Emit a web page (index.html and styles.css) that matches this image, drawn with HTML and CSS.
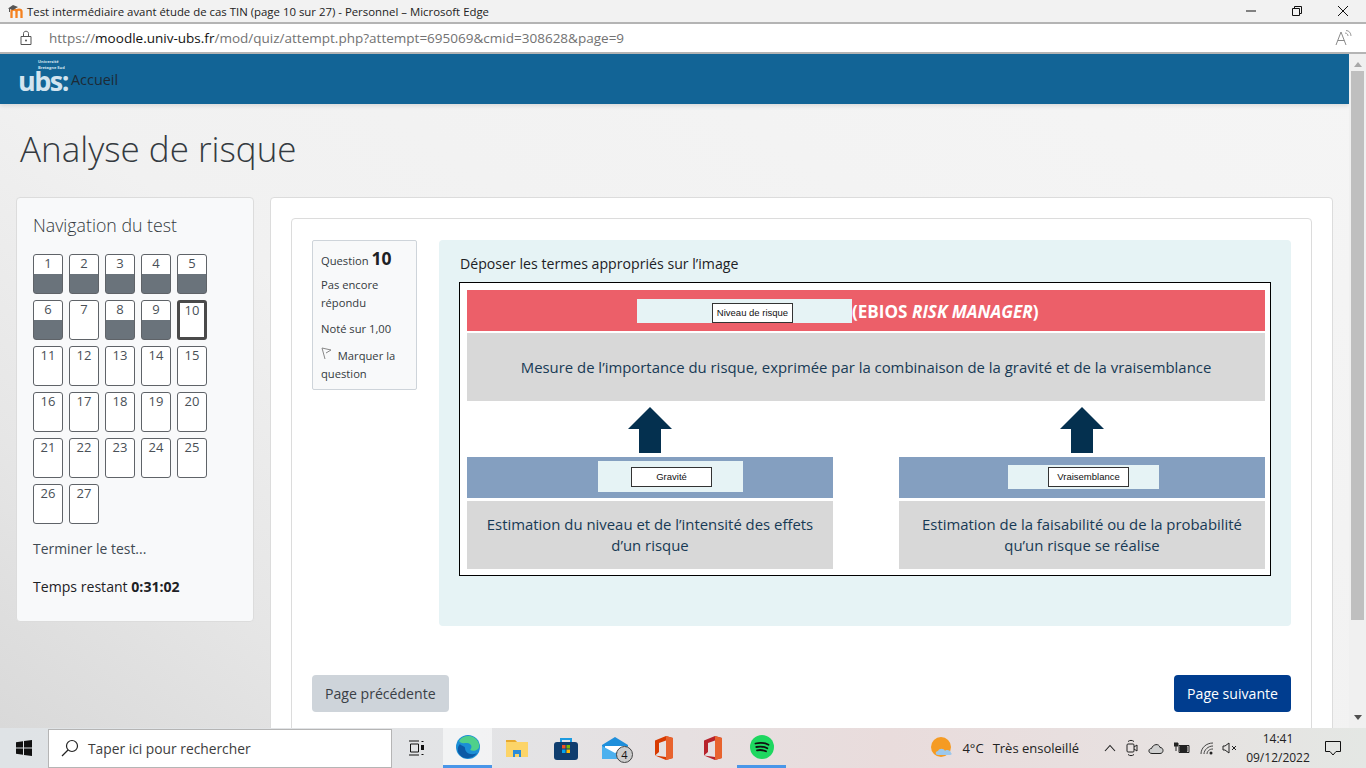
FILE: index.html
```html
<!DOCTYPE html>
<html lang="fr">
<head>
<meta charset="utf-8">
<title>Test intermédiaire</title>
<link rel="stylesheet" href="styles.css">
</head>
<body>
<div class="titlebar">
 <svg class="favicon" width="16" height="14" viewBox="0 0 16 14"><path d="M3.500 14V7.500c0-2.500 5-2.500 5 0V14M8.500 7.500c0-2.500 5-2.500 5 0V14" stroke="#f58220" stroke-width="2.300" fill="none"/><path d="M0 4.500L5 1l5 2-5 3z" fill="#555"/><path d="M1.500 4.500V8" stroke="#555"/></svg>
 <span class="wintitle">Test intermédiaire avant étude de cas TIN (page 10 sur 27) - Personnel – Microsoft Edge</span>
 <div class="winbtns">
  <svg width="12" height="12" viewBox="0 0 12 12"><path d="M1 6h10" stroke="#111" fill="none"/></svg>
  <svg width="12" height="12" viewBox="0 0 12 12"><path d="M1.500 3.500h7v7h-7zM3.500 3.500V1.500h7v7h-2" stroke="#111" fill="none"/></svg>
  <svg width="12" height="12" viewBox="0 0 12 12"><path d="M1 1l10 10M11 1L1 11" stroke="#111" fill="none"/></svg>
 </div>
</div>
<div class="addressbar">
 <svg class="lock" width="14" height="16" viewBox="0 0 14 16"><path d="M2 6.500h10v8H2zM4.500 6.500V3.500c0-3 5-3 5 0v3" stroke="#555" fill="none"/><circle cx="7" cy="10.500" r="1" fill="#555"/></svg>
 <span class="url">https://<b>moodle.univ-ubs.fr</b>/mod/quiz/attempt.php?attempt=695069&amp;cmid=308628&amp;page=9</span>
 <svg class="readaloud" width="18" height="16" viewBox="0 0 18 16"><path d="M1 15L6 2l5 13M2.800 10.500h6.500" stroke="#8a8a8a" fill="none"/><path d="M10 3c2 0 3 1.500 3 3M11 0.500c3 0 5 2.500 5 5.500" stroke="#9a9a9a" fill="none"/></svg>
</div>
<div class="viewport">
 <div class="page">
  <nav class="topnav">
   <span class="logo"><span class="logo-small">Université<br>Bretagne Sud</span>ubs:</span>
   <span class="home">Accueil</span>
  </nav>
  <h1 class="pagetitle">Analyse de risque</h1>
  <div class="columns">
   <aside class="navblock">
    <h2 class="navtitle">Navigation du test</h2>
    <div class="qgrid">
     <span class="qbtn done">1</span>
     <span class="qbtn done">2</span>
     <span class="qbtn done">3</span>
     <span class="qbtn done">4</span>
     <span class="qbtn done">5</span>
     <span class="qbtn done">6</span>
     <span class="qbtn">7</span>
     <span class="qbtn done">8</span>
     <span class="qbtn done">9</span>
     <span class="qbtn current">10</span>
     <span class="qbtn">11</span>
     <span class="qbtn">12</span>
     <span class="qbtn">13</span>
     <span class="qbtn">14</span>
     <span class="qbtn">15</span>
     <span class="qbtn">16</span>
     <span class="qbtn">17</span>
     <span class="qbtn">18</span>
     <span class="qbtn">19</span>
     <span class="qbtn">20</span>
     <span class="qbtn">21</span>
     <span class="qbtn">22</span>
     <span class="qbtn">23</span>
     <span class="qbtn">24</span>
     <span class="qbtn">25</span>
     <span class="qbtn">26</span>
     <span class="qbtn">27</span>
    </div>
    <div class="finish">Terminer le test...</div>
    <div class="timer">Temps restant <b>0:31:02</b></div>
   </aside>
   <main class="region">
    <div class="card">
     <div class="question">
      <div class="info">
       <div class="qno">Question <b>10</b></div>
       <div class="inforow">Pas encore répondu</div>
       <div class="inforow">Noté sur 1,00</div>
       <div class="flagrow"><svg width="11" height="13" viewBox="0 0 11 13"><path d="M1 1l9 2-5 3M1 1l3 11" stroke="#888" fill="none"/></svg> &nbsp;Marquer la question</div>
      </div>
      <div class="content">
       <p class="prompt">Déposer les termes appropriés sur l’image</p>
       <div class="diagram">
        <div class="band red"><span class="ebios">(EBIOS <i>RISK MANAGER</i>)</span></div>
        <div class="desc wide">Mesure de l’importance du risque, exprimée par la combinaison de la gravité et de la vraisemblance</div>
        <div class="arrows">
         <svg width="44" height="46" viewBox="0 0 44 46"><path d="M22 0l22 22H33v24H11V22H0z" fill="#04304f"/></svg>
         <svg width="44" height="46" viewBox="0 0 44 46"><path d="M22 0l22 22H33v24H11V22H0z" fill="#04304f"/></svg>
        </div>
        <div class="pair">
         <div class="side">
          <div class="band blue"></div>
          <div class="desc">Estimation du niveau et de l’intensité des effets d’un risque</div>
         </div>
         <div class="side">
          <div class="band blue"></div>
          <div class="desc">Estimation de la faisabilité ou de la probabilité qu’un risque se réalise</div>
         </div>
        </div>
        <div class="zone zone-risk"></div>
        <div class="zone zone-grav"></div>
        <div class="zone zone-vrai"></div>
        <div class="drag drag-risk">Niveau de risque</div>
        <div class="drag drag-grav">Gravité</div>
        <div class="drag drag-vrai">Vraisemblance</div>
       </div>
      </div>
     </div>
     <div class="buttons">
      <span class="btn prev">Page précédente</span>
      <span class="btn next">Page suivante</span>
     </div>
    </div>
   </main>
  </div>
 </div>
 <div class="scrollbar">
  <span class="arrow-up"></span>
  <span class="thumb"></span>
  <span class="arrow-down"></span>
 </div>
</div>
<footer class="taskbar">
 <svg class="start" width="16" height="16" viewBox="0 0 16 16"><path d="M0 2.300l7-1v6.200H0zM8 1.100l8-1.100v7.500H8zM0 8.500h7v6.200l-7-1zM8 8.500h8V16l-8-1.100z" fill="#111"/></svg>
 <div class="search">
  <svg width="18" height="18" viewBox="0 0 18 18"><circle cx="11" cy="7" r="5.500" stroke="#222" fill="none" stroke-width="1.200"/><path d="M7 11l-6 6" stroke="#222" stroke-width="1.200"/></svg>
  <span>Taper ici pour rechercher</span>
 </div>
 <svg class="taskview" width="16" height="16" viewBox="0 0 16 16"><path d="M1 1h10M1 15h10M2.500 4h8v8h-8z" stroke="#111" fill="none"/><path d="M13.500 1h2v1h-2zM13 5h3v5h-3zM13.500 14h2v1h-2z" fill="#111"/></svg>
 <div class="apps">
  <span class="app active">
   <svg width="24" height="24" viewBox="0 0 24 24"><circle cx="12" cy="12" r="12" fill="#1b8fd6"/><path d="M3 6C7-1 20-1 23 9c1.500 6-5 8-9 6 3-3 1-7-3-7-3 0-6 1-8-2z" fill="#4fd08a"/><path d="M9 13c0 5 6 8 12 5-4 6-13 7-17 2-3-3-3-8 0-11 1 2 5 2 5 4z" fill="#0c5aa6"/></svg>
  </span>
  <span class="app">
   <svg width="22" height="20" viewBox="0 0 22 20"><path d="M0 2h9l2 2h11v15H0z" fill="#fcd468"/><path d="M0 2h9l2 2H0z" fill="#e8a92e"/><path d="M7 12h8v7h-2v-3H9v3H7z" fill="#2b8bd8"/></svg>
  </span>
  <span class="app">
   <svg width="24" height="24" viewBox="0 0 24 24"><path d="M7 6V3h10v3" stroke="#1c9be0" stroke-width="2" fill="none"/><rect x="0" y="6" width="24" height="18" rx="3" fill="#0f3d6e"/><path d="M8 9h3.500v3.500H8z" fill="#f25022"/><path d="M12.500 9H16v3.500h-3.500z" fill="#7fba00"/><path d="M8 13.500h3.500V17H8z" fill="#00a4ef"/><path d="M12.500 13.500H16V17h-3.500z" fill="#ffb900"/></svg>
  </span>
  <span class="app mail">
   <svg width="26" height="22" viewBox="0 0 26 22"><path d="M0 8l13-8 13 8v14H0z" fill="#1f8fdb"/><path d="M3 9h20v5l-10 5-10-5z" fill="#fff"/><path d="M0 9l13 7 13-7v13H0z" fill="#4bb0ee"/></svg>
   <span class="badge">4</span>
  </span>
  <span class="app">
   <svg width="18" height="24" viewBox="0 0 18 24"><path d="M0 4.500L11 0l7 2v20l-7 2L0 19.500l11 1.500V4.500L4 7v9l-4 3.500z" fill="#d83b01"/><path d="M11 0l7 2v20l-7 2z" fill="#e8632e"/></svg>
  </span>
  <span class="app">
   <svg width="18" height="24" viewBox="0 0 18 24"><path d="M0 4.500L11 0l7 2v20l-7 2L0 19.500l11 1.500V4.500L4 7v9l-4 3.500z" fill="#b7232b"/><path d="M11 0l7 2v20l-7 2z" fill="#e8632e"/></svg>
  </span>
  <span class="app active-line">
   <svg width="24" height="24" viewBox="0 0 24 24"><circle cx="12" cy="12" r="12" fill="#1ed760"/><path d="M5.500 8.500c4-1 9-1 13 1.200M6.300 12c3.500-.8 7.500-.6 11 1.300M7 15.300c3-.6 6-.4 9 1" stroke="#111" stroke-width="1.800" fill="none" stroke-linecap="round"/></svg>
  </span>
 </div>
 <div class="weather">
  <svg width="22" height="22" viewBox="0 0 22 22"><circle cx="10" cy="10" r="10" fill="#f59b23"/><path d="M7 18c-3 0-3-4 0-4 1-3 6-3 7 0 1-2 6-1 6 2 1 0 1 2-1 2z" fill="#9cc8ec"/></svg>
  <span class="temp">4°C</span>
  <span>Très ensoleillé</span>
 </div>
 <div class="tray">
  <svg width="12" height="8" viewBox="0 0 12 8"><path d="M1 7l5-5.500L11 7" stroke="#222" fill="none" stroke-width="1.100"/></svg>
  <svg width="12" height="18" viewBox="0 0 12 18"><rect x="1" y="5" width="7" height="8" rx="1" stroke="#222" fill="none"/><path d="M8 8l3-2v6l-3-2M2 2.500c2-1.500 4-1.500 6 0M2 15.500c2 1.500 4 1.500 6 0" stroke="#222" fill="none"/></svg>
  <svg width="16" height="11" viewBox="0 0 16 11"><path d="M4 10.500c-4 0-4-5-.5-5C5 1 11 0 12 4.500c4 0 4 6 0 6z" stroke="#222" fill="#cfcfcf"/></svg>
  <svg width="16" height="12" viewBox="0 0 16 12"><path d="M5 3.500h10v7H5z" stroke="#222" fill="none"/><path d="M6 4.500h7v5H6zM0 1h4v3H0zM2 4v5" fill="#222" stroke="#222"/></svg>
  <svg width="14" height="13" viewBox="0 0 14 13"><path d="M1 12C1 6 6 1 13 1M4 12c0-4 4-8 9-8M7 12c0-2.500 2-5 6-5" stroke="#444" fill="none"/><circle cx="11" cy="11" r="1.500" fill="#222"/></svg>
  <svg class="mute" width="15" height="12" viewBox="0 0 15 12"><path d="M1 4h2l4-3v10L3 8H1z" stroke="#222" fill="none"/><path d="M10 4l4 4M14 4l-4 4" stroke="#222"/></svg>
 </div>
 <div class="clock"><span>14:41</span><span>09/12/2022</span></div>
 <svg class="notif" width="16" height="15" viewBox="0 0 16 15"><path d="M.5.500h15v10h-4.500l-3 3.500-3-3.500H.5z" stroke="#111" fill="none"/></svg>
</footer>
</body>
</html>
```

FILE: styles.css
```css
* {
 box-sizing: border-box;
}
html, body {
 margin: 0;
 height: 768px;
 overflow: hidden;
}
body {
 font-family: "Open Sans", "Noto Sans", sans-serif;
 color: #1d2125;
 font-size: 13px;
 background: #f0f0f0;
}

/* browser window */
.titlebar {
 height: 24px;
 background: #f2f2f2;
 border-bottom: 2px solid #b4b4b4;
 display: flex;
 align-items: center;
 padding-left: 8px;
 font-size: 11.400px;
 color: #222;
}
.favicon {
 margin-right: 3px;
}
.winbtns {
 margin-left: auto;
 display: flex;
 gap: 34px;
 padding-right: 17px;
}
.addressbar {
 height: 30px;
 background: #fff;
 border-bottom: 2px solid #b4b4b4;
 display: flex;
 align-items: center;
 padding-left: 19px;
}
.url {
 margin-left: 16px;
 font-size: 13.520px;
 color: #727272;
}
.url b {
 font-weight: 400;
 color: #111;
}
.readaloud {
 margin-left: auto;
 margin-right: 13px;
}

/* page */
.viewport {
 height: 674px;
 display: flex;
}
.page {
 flex: 1;
 overflow: hidden;
 background: linear-gradient(35deg, #d9d9d9 0%, #e6e6e6 18%, #f1f1f1 40%, #f5f5f5 100%);
}
.topnav {
 height: 50px;
 background: #126496;
 display: flex;
 align-items: center;
 padding-left: 18px;
 box-shadow: 0 2px 4px rgba(0,0,0,.1);
}
.logo {
 position: relative;
 width: 53px;
 font-size: 27px;
 line-height: 30px;
 font-weight: 700;
 letter-spacing: -1.500px;
 color: #d3e4ef;
 margin-top: 3px;
}
.logo-small {
 position: absolute;
 left: 20px;
 top: -7px;
 font-size: 4px;
 line-height: 6px;
 letter-spacing: 0;
 white-space: nowrap;
}
.home {
 font-size: 14.400px;
 color: #1d2a35;
}
.pagetitle {
 margin: 0;
 height: 93px;
 padding: 22px 0 0 20px;
 font-family: "Open Sans", sans-serif;
 font-size: 35px;
 line-height: 46px;
 font-weight: 300;
 color: #343a40;
}
.columns {
 display: flex;
 align-items: flex-start;
 padding-left: 16px;
 gap: 16px;
}

/* navigation du test */
.navblock {
 width: 238px;
 height: 425px;
 flex: none;
 background: #f8f9fa;
 border: 1px solid #dcdcdc;
 border-radius: 4px;
 padding: 15px 16px 16px;
}
.navtitle {
 margin: 0 0 17px;
 font-size: 17.750px;
 line-height: 24px;
 font-weight: 300;
 color: #343a40;
}
.qgrid {
 display: grid;
 grid-template-columns: repeat(5, 30px);
 grid-auto-rows: 40px;
 gap: 6px;
}
.qbtn {
 border: 1px solid #5f6368;
 border-radius: 3px;
 background: #fff;
 color: #495057;
 font-size: 13px;
 line-height: 17px;
 text-align: center;
}
.qbtn.done {
 background: linear-gradient(#fff 19px, #6a737b 19px);
}
.qbtn.current {
 border: 3px solid #4a4a4a;
 line-height: 15px;
}
.finish {
 margin-top: 15px;
 font-size: 13.900px;
 line-height: 20px;
 color: #3f4a52;
}
.timer {
 margin-top: 18px;
 font-size: 14.100px;
 line-height: 20px;
}

/* question */
.region {
 width: 1063px;
 height: 560px;
 flex: none;
 background: #fff;
 border: 1px solid #dcdcdc;
 border-radius: 4px;
 padding: 20px 20px 0;
}
.card {
 height: 560px;
 background: #fff;
 border: 1px solid #dcdcdc;
 border-radius: 4px;
 padding: 21px 20px 0;
}
.question {
 display: flex;
 align-items: flex-start;
 gap: 22px;
}
.info {
 width: 105px;
 flex: none;
 height: 150px;
 background: #f8f9fa;
 border: 1px solid #ced4da;
 border-radius: 2px;
 padding: 6px 8px;
 font-size: 11.200px;
 line-height: 18px;
 color: #343a40;
}
.qno {
 line-height: 22px;
}
.qno b {
 font-size: 17.500px;
 color: #1d2125;
}
.inforow {
 margin-top: 4px;
 margin-bottom: 8px;
}
.flagrow {
 margin-top: 9px;
}
.content {
 width: 852px;
 height: 386px;
 flex: none;
 background: #e6f3f5;
 border-radius: 4px;
 padding: 14px 20px;
}
.prompt {
 margin: 0 0 8px 1px;
 font-size: 14.150px;
 line-height: 20px;
 color: #1d2125;
}
.diagram {
 position: relative;
 width: 812px;
 height: 294px;
 background: #fff;
 border: 1px solid #000;
 padding: 7px 5px 7px 7px;
 color: #173a55;
}
.band {
 height: 41px;
 display: flex;
 align-items: center;
}
.red {
 background: #ec5f69;
}
.ebios {
 margin-left: 385px;
 margin-top: 1px;
 color: #fff;
 font-family: "Open Sans", sans-serif;
 font-size: 17.100px;
 font-weight: 700;
}
.blue {
 background: #849fc0;
}
.desc {
 margin-top: 2px;
 height: 68px;
 background: #d8d8d8;
 display: flex;
 align-items: center;
 justify-content: center;
 text-align: center;
 padding: 0 16px;
 font-size: 14.900px;
 line-height: 21px;
}
.side .desc {
 margin-top: 3px;
}
.arrows {
 height: 56px;
 display: flex;
 padding: 6px 0 0 161px;
 gap: 388px;
}
.pair {
 display: flex;
 justify-content: space-between;
}
.side {
 width: 366px;
}

/* drop zones */
.zone {
 position: absolute;
 background: #e6f3f5;
}
.zone-risk {
 left: 177px;
 top: 16px;
 width: 215px;
 height: 24px;
}
.zone-grav {
 left: 138px;
 top: 178px;
 width: 145px;
 height: 31px;
}
.zone-vrai {
 left: 548px;
 top: 182px;
 width: 151px;
 height: 24px;
}
.drag {
 position: absolute;
 width: 81px;
 height: 20px;
 background: #fff;
 border: 1px solid #333;
 font-family: "Liberation Sans", sans-serif;
 font-size: 9.500px;
 line-height: 18px;
 text-align: center;
 color: #111;
}
.drag-risk {
 left: 252px;
 top: 20px;
}
.drag-grav {
 left: 171px;
 top: 184px;
}
.drag-vrai {
 left: 588px;
 top: 184px;
}
.buttons {
 display: flex;
 justify-content: space-between;
 margin-top: 49px;
}
.btn {
 height: 37px;
 padding: 0 13px;
 border-radius: 4px;
 font-size: 14.100px;
 line-height: 37px;
}
.prev {
 background: #ced4da;
 color: #3a4046;
}
.next {
 background: #003d8f;
 color: #fff;
}

/* scrollbar */
.scrollbar {
 width: 17px;
 flex: none;
 background: #f0f0f0;
 display: flex;
 flex-direction: column;
 align-items: center;
 padding-top: 8px;
}
.arrow-up {
 border: 4px solid transparent;
 border-top: 0;
 border-bottom: 5px solid #a8a8a8;
}
.thumb {
 width: 13px;
 height: 549px;
 margin-top: 4px;
 background: #bfbfbf;
}
.arrow-down {
 margin-top: auto;
 margin-bottom: 8px;
 border: 4px solid transparent;
 border-bottom: 0;
 border-top: 5px solid #505050;
}

/* windows taskbar */
.taskbar {
 height: 40px;
 display: flex;
 align-items: center;
 background: linear-gradient(90deg, #dfe3e6 0%, #e3e4e6 35%, #e9dcdc 65%, #e8dfdf 78%, #e4e7e4 100%);
 color: #222;
}
.start {
 margin-left: 16px;
 flex: none;
}
.search {
 width: 344px;
 height: 39px;
 margin-left: 16px;
 background: #fff;
 border: 1px solid #b5b5b5;
 display: flex;
 align-items: center;
 padding-left: 12px;
 gap: 9px;
 font-size: 13.800px;
 color: #3d3d3d;
}
.taskview {
 margin-left: 16px;
 flex: none;
}
.apps {
 display: flex;
 align-items: center;
 margin-left: 19px;
 height: 40px;
}
.app {
 position: relative;
 width: 49px;
 height: 40px;
 display: flex;
 align-items: center;
 justify-content: center;
}
.app.active {
 background: rgba(255,255,255,.55);
 border-bottom: 3px solid #4a96e8;
}
.app.active-line {
 border-bottom: 3px solid #4a96e8;
}
.badge {
 position: absolute;
 right: 6px;
 bottom: 5px;
 width: 17px;
 height: 17px;
 border-radius: 50%;
 background: #ccc;
 border: 1px solid #444;
 font-size: 11px;
 line-height: 15px;
 text-align: center;
 color: #111;
}
.weather {
 margin-left: auto;
 display: flex;
 align-items: center;
 gap: 9px;
 font-size: 13px;
}
.temp {
 margin-right: 0;
}
.tray {
 display: flex;
 align-items: center;
 gap: 10px;
 margin-left: 25px;
}
.mute {
 margin-left: -2px;
}
.clock {
 width: 66px;
 margin-left: 8px;
 display: flex;
 flex-direction: column;
 align-items: center;
 font-size: 12px;
 line-height: 19px;
}
.notif {
 margin: 0 25px 0 14px;
 flex: none;
}
```
